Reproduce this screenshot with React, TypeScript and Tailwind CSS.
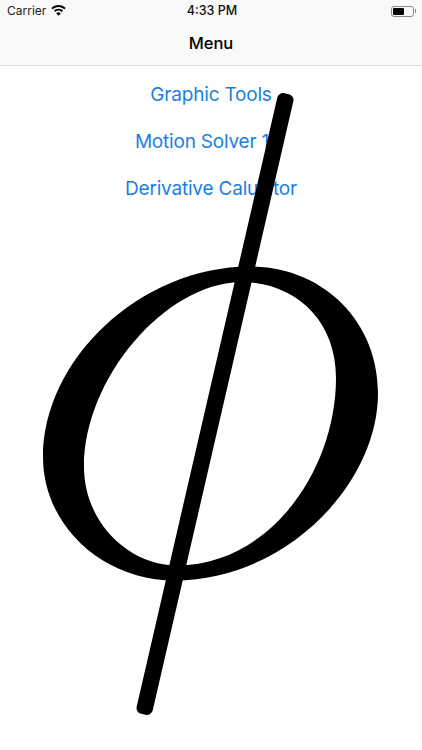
import React from 'react';

const font = { fontFamily: 'Inter, "Liberation Sans", sans-serif' };

const menuItems = [
  { label: 'Graphic Tools', pad: '' },
  { label: 'Motion Solver 1', pad: 'pr-[18px]' },
  { label: 'Derivative Calulator', pad: '' },
];

// status bar wifi fan
const WifiIcon = () => (
  <svg width="15" height="11" viewBox="0 0 15 11" className="ml-[5px] mb-[1px]">
    <path d="M7.5 0C4.7 0 2.2 1.1.3 2.9l1.3 1.4C3.1 2.800 5.200 1.900 7.500 1.900s4.400.9 5.900 2.400l1.300-1.400C12.800 1.100 10.300 0 7.500 0z" fill="#000" />
    <path d="M7.500 3.700c-1.800 0-3.400.7-4.600 1.900l1.300 1.400c.9-.8 2-1.400 3.300-1.400s2.400.6 3.300 1.400l1.300-1.400C10.900 4.400 9.300 3.700 7.500 3.700z" fill="#000" />
    <path d="M7.500 7.300c-.9 0-1.700.4-2.300 1l2.300 2.500 2.300-2.500c-.6-.6-1.400-1-2.300-1z" fill="#000" />
  </svg>
);

const BatteryIcon = () => (
  <div className="flex items-center">
    <div className="w-[23px] h-[11px] rounded-[3px] border border-[#8a8a8a] p-[1px] flex">
      <div className="w-[11px] h-full bg-black rounded-[1px]" />
    </div>
    <div className="w-[1px] h-[4px] bg-[#8a8a8a] ml-[1px]" />
  </div>
);

const PhiSymbol = () => (
  <svg width="422" height="750" viewBox="0 0 422 750" className="absolute top-0 left-0 pointer-events-none">
    <path
      fillRule="evenodd"
      d="M250 266.500C324 267 378 322 378 393C378 485 285 580 175 580.500C102 580.500 43 525 43 457C43 360 140 266.500 250 266.500Z
         M240 282C165 284 84 378 84 467C84 520 126 565 177 565.500C270 565 336 470 336 378C336 320 295 282 240 282Z"
      fill="#000"
    />
    <rect x="206.750" y="85.500" width="16.500" height="637" rx="6" transform="rotate(13 215 404)" fill="#000" />
  </svg>
);

export default function App() {
  return (
    <div className="relative w-[422px] h-[750px] bg-white overflow-hidden" style={font}>
      <div className="bg-[#f9f9f9] border-b border-[#dcdcdc] h-[66px]">
        <div className="relative flex items-center justify-between h-[22px] pl-[7px] pr-[6px]">
          <div className="flex items-center text-[12px] text-[#222]">
            Carrier
            <WifiIcon />
          </div>
          <div className="absolute left-[2px] right-0 text-center text-[12.500px] font-medium text-[#111]">4:33 PM</div>
          <BatteryIcon />
        </div>
        <div className="h-[43px] flex items-center justify-center text-[16.500px] font-medium text-black">Menu</div>
      </div>
      <div className="flex flex-col items-center pt-[6px]">
        {menuItems.map((item) => (
          <button key={item.label} className={`h-[47px] text-[19px] tracking-[-0.2px] text-[#1a7fe3] ${item.pad}`}>
            {item.label}
          </button>
        ))}
      </div>
      <PhiSymbol />
    </div>
  );
}
